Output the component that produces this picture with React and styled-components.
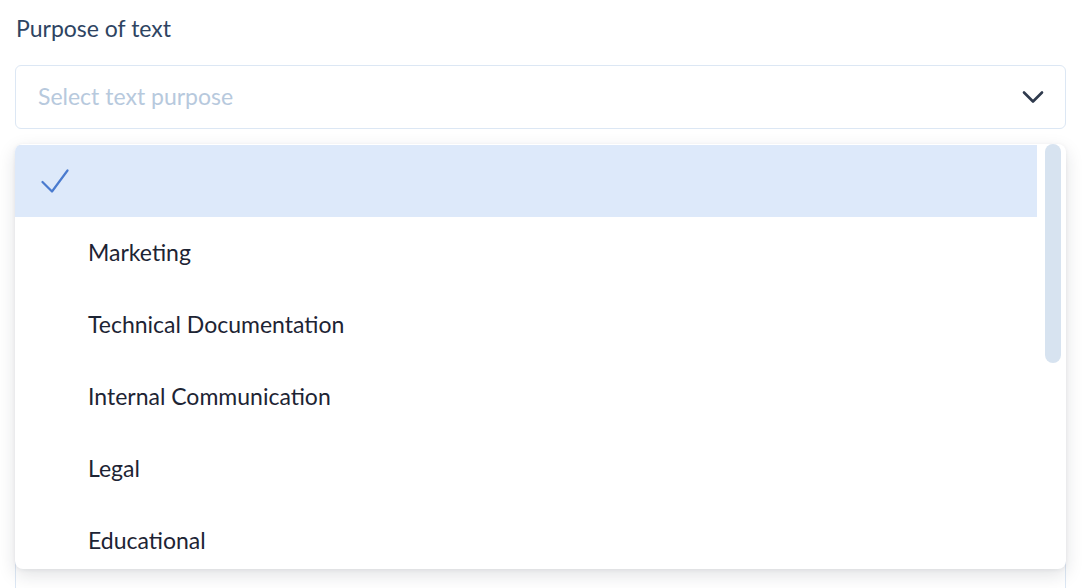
import React from "react";
import styled, { createGlobalStyle } from "styled-components";
import { ChevronDown } from "lucide-react";

const Global = createGlobalStyle`
  html, body { margin: 0; padding: 0; background: #ffffff; }
  body { font-family: "Lato", "Noto Sans", sans-serif; }
  * { box-sizing: border-box; }
`;

const Page = styled.div`
  padding: 13px 16px 0 15px;
  height: 588px;
  overflow: hidden;
`;

const Label = styled.div`
  font-size: 23px;
  line-height: 30px;
  color: #2e4462;
  padding-left: 1px;
`;

const Field = styled.div`
  position: relative;
  margin-top: 22px;
`;

const SelectBox = styled.div`
  height: 64px;
  border: 1px solid #dce7f4;
  border-radius: 6px;
  display: flex;
  align-items: center;
  justify-content: space-between;
  padding: 0 14px 2px 22px;
  background: #fff;
`;

const Placeholder = styled.span`
  font-size: 23px;
  color: #b7c9dd;
`;

const Chevron = styled(ChevronDown)`
  color: #2f3a4d;
  margin-top: 2px;
`;

const Menu = styled.div`
  position: absolute;
  top: 79px;
  left: 0;
  right: 0;
  height: 425px;
  background: #fff;
  border-radius: 8px;
  box-shadow: 0 6px 18px rgba(20, 30, 50, 0.13), 0 1px 4px rgba(20, 30, 50, 0.06);
  overflow: hidden;
  z-index: 10;
`;

const List = styled.div`
  height: 100%;
  overflow: hidden;
  padding: 1px 29px 0 0;
`;

const ScrollThumb = styled.div`
  position: absolute;
  top: 0;
  right: 5px;
  width: 16px;
  height: 219px;
  border-radius: 8px;
  background: #d7e3f0;
`;

const Option = styled.div`
  height: 72px;
  display: flex;
  align-items: center;
  padding-left: 26px;
  padding-bottom: 3px;
  background: ${(p) => (p.$selected ? "#dde9fa" : "transparent")};
  font-size: 23px;
  color: #1d2434;
`;

const CheckSlot = styled.span`
  width: 47px;
  display: flex;
  align-items: center;
  padding-top: 3px;
`;

const Below = styled.div`
  margin-top: 24px;
  height: 460px;
  border: 1px solid #dce7f4;
  border-radius: 6px;
`;

const CheckMark = () => (
  <svg width="28" height="25" viewBox="0 0 28 25" fill="none">
    <path d="M1.5 13 L11 22.5 L26.5 1.5" stroke="#4a7bcf" strokeWidth="2.2" strokeLinecap="round" strokeLinejoin="round" />
  </svg>
);

const options = [
  "",
  "Marketing",
  "Technical Documentation",
  "Internal Communication",
  "Legal",
  "Educational",
];

export default function App() {
  return (
    <>
      <Global />
      <Page>
        <Label>Purpose of text</Label>
        <Field>
          <SelectBox>
            <Placeholder>Select text purpose</Placeholder>
            <Chevron size={36} strokeWidth={1.75} />
          </SelectBox>
          <Menu>
            <List>
              {options.map((o, i) => (
                <Option key={i} $selected={i === 0}>
                  <CheckSlot>{i === 0 && <CheckMark />}</CheckSlot>
                  {o}
                </Option>
              ))}
            </List>
            <ScrollThumb />
          </Menu>
          <Below />
        </Field>
      </Page>
    </>
  );
}
